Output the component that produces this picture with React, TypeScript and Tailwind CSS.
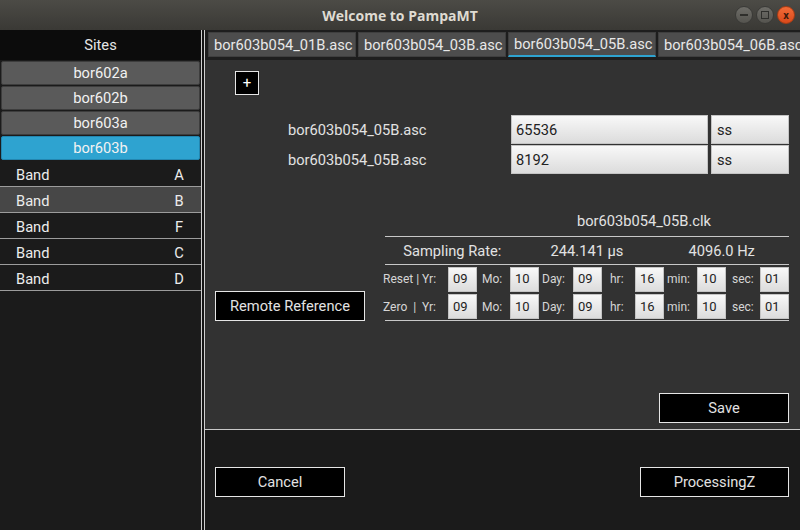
import React from "react";

const sites = ["bor602a", "bor602b", "bor603a", "bor603b"];
const bands = ["A", "B", "F", "C", "D"];
const tabs = ["bor603b054_01B.asc", "bor603b054_03B.asc", "bor603b054_05B.asc", "bor603b054_06B.asc"];

function TimeBox({ v }: { v: string }) {
  return (
    <div className="flex h-[25px] items-center border border-[#c4c4c4] bg-gradient-to-b from-[#f8f8f8] to-[#dcdcdc] pl-[4px] text-[13px] text-[#222]">
      {v}
    </div>
  );
}

function TimeRow({ label, h }: { label: string; h: string }) {
  return (
    <div className={`grid grid-cols-[63px_29px_33px_29px_34px_29px_33px_29px_33px_29px_34px_29px] items-center text-[12px] text-[#d6d6d6] ${h}`}>
      <span className="-ml-[2px] whitespace-pre">{label}</span>
      <TimeBox v="09" />
      <span className="pl-[5px]">Mo:</span>
      <TimeBox v="10" />
      <span className="pl-[3px]">Day:</span>
      <TimeBox v="09" />
      <span className="pl-[8px]">hr:</span>
      <TimeBox v="16" />
      <span className="pl-[3px]">min:</span>
      <TimeBox v="10" />
      <span className="pl-[6px]">sec:</span>
      <TimeBox v="01" />
    </div>
  );
}

function DarkButton({ children, className }: { children: React.ReactNode; className: string }) {
  return (
    <button className={`flex h-[30px] items-center justify-center border border-[#e6e6e6] bg-black text-[#e2e2e2] ${className}`}>
      {children}
    </button>
  );
}

export default function App() {
  return (
    <div className="flex h-[530px] w-[800px] flex-col overflow-hidden font-['Roboto',sans-serif] text-[14.67px]">
      {/* title bar */}
      <div className="grid h-[30px] shrink-0 grid-cols-[1fr_auto_1fr] items-center bg-gradient-to-b from-[#4c4b46] to-[#3a3935]">
        <div />
        <span className="font-['Open_Sans',sans-serif] text-[14px] font-bold text-[#dfdbd2]">Welcome to PampaMT</span>
        <div className="flex justify-end gap-[3px] pr-[5px]">
          <span className="flex h-[18px] w-[18px] items-center justify-center rounded-full border border-[#3a3a37] bg-gradient-to-b from-[#6e6d68] to-[#55544f]">
            <span className="h-[2px] w-[8px] bg-[#2f2f2c]" />
          </span>
          <span className="flex h-[18px] w-[18px] items-center justify-center rounded-full border border-[#3a3a37] bg-gradient-to-b from-[#6e6d68] to-[#55544f]">
            <span className="h-[8px] w-[8px] border-[1.5px] border-[#2f2f2c]" />
          </span>
          <span className="flex h-[18px] w-[18px] items-center justify-center rounded-full border border-[#a83c14] bg-gradient-to-b from-[#f26b37] to-[#d9491a] text-[11px] font-bold leading-none text-[#3b1a0c]">
            x
          </span>
        </div>
      </div>

      <div className="flex min-h-0 flex-1">
        {/* sidebar */}
        <div className="flex w-[201px] shrink-0 flex-col bg-[#1b1b1b]">
          <div className="flex h-[30px] items-center justify-center bg-[#0c0c0c] text-[#e6e6e6]">Sites</div>
          <div className="flex flex-col px-[1px] pt-[1px]">
            {sites.map((s) => (
              <div
                key={s}
                className={`mb-[1px] flex h-[24px] items-center justify-center rounded-[2px] border text-[#f2f2f2] ${
                  s === "bor603b" ? "border-[#2386b0] bg-[#2ea3d0]" : "border-[#3d3d3d] bg-[#5a5a5a]"
                }`}
              >
                {s}
              </div>
            ))}
          </div>
          {bands.map((b) => (
            <div
              key={b}
              className={`flex h-[26px] items-center justify-between border-b border-[#9c9c9c] pl-[16px] pr-[12px] pt-[2px] text-[#ececec] ${
                b === "B" ? "bg-[#474747]" : ""
              }`}
            >
              <span>Band</span>
              <span className="w-[20px] text-center">{b}</span>
            </div>
          ))}
        </div>

        {/* splitter */}
        <div className="w-[4px] shrink-0 border-x border-[#cfcfcf] bg-[#141414]" />

        {/* main */}
        <div className="flex min-w-0 flex-1 flex-col">
          <div className="flex h-[30px] shrink-0 gap-[2px] overflow-hidden bg-[#1e1e1e] pl-[3px] pt-[2px]">
            {tabs.map((t) => (
              <div
                key={t}
                className={`flex h-[25px] w-[148px] shrink-0 items-center border border-[#3f3f3f] bg-[#4d4d4d] pl-[5px] text-[#e8e8e8] ${
                  t === "bor603b054_05B.asc" ? "border-b-2 border-b-[#2ea3d0]" : ""
                }`}
              >
                {t}
              </div>
            ))}
          </div>

          <div className="flex h-[369px] shrink-0 flex-col bg-[#323232] text-[#e2e2e2]">
            <button className="ml-[30px] mt-[11px] flex h-[24px] w-[24px] items-center justify-center border border-[#e6e6e6] bg-black text-[15px] text-white">
              +
            </button>

            <div className="mt-[20px] flex flex-col gap-[1px] pl-[83px]">
              {["65536", "8192"].map((v) => (
                <div key={v} className="flex items-center">
                  <span className="w-[223px]">bor603b054_05B.asc</span>
                  <div className="flex h-[29px] w-[197px] items-center border border-[#c4c4c4] bg-gradient-to-b from-[#f8f8f8] to-[#dcdcdc] pl-[4px] text-[#222]">
                    {v}
                  </div>
                  <div className="ml-[3px] flex h-[29px] w-[78px] items-center border border-[#c4c4c4] bg-gradient-to-b from-[#f8f8f8] to-[#dcdcdc] pl-[5px] text-[#222]">
                    ss
                  </div>
                </div>
              ))}
            </div>

            <div className="mt-[34px] flex">
              <div className="flex w-[180px] flex-col justify-end pl-[10px]">
                <DarkButton className="w-[150px]">Remote Reference</DarkButton>
              </div>
              <div className="flex w-[404px] flex-col">
                <div className="h-[26px] pl-[192px] leading-[26px]">bor603b054_05B.clk</div>
                <div className="mt-[2px] h-px bg-[#c8c8c8]" />
                <div className="grid h-[27px] grid-cols-3 items-center pt-[1px] text-center">
                  <span>Sampling Rate:</span>
                  <span>244.141 µs</span>
                  <span>4096.0 Hz</span>
                </div>
                <div className="h-px bg-[#c8c8c8]" />
                <TimeRow label="Reset | Yr:" h="h-[28px]" />
                <TimeRow label="Zero  |  Yr:" h="h-[27px]" />
                <div className="h-px bg-[#c8c8c8]" />
              </div>
            </div>

            <div className="mt-auto flex justify-end pb-[6px] pr-[11px]">
              <DarkButton className="w-[130px]">Save</DarkButton>
            </div>
          </div>

          <div className="h-px shrink-0 bg-[#c8c8c8]" />

          <div className="flex flex-1 items-start justify-between bg-[#1b1b1b] pl-[10px] pr-[11px] pt-[37px]">
            <DarkButton className="w-[130px]">Cancel</DarkButton>
            <DarkButton className="w-[149px]">ProcessingZ</DarkButton>
          </div>
        </div>
      </div>
    </div>
  );
}
